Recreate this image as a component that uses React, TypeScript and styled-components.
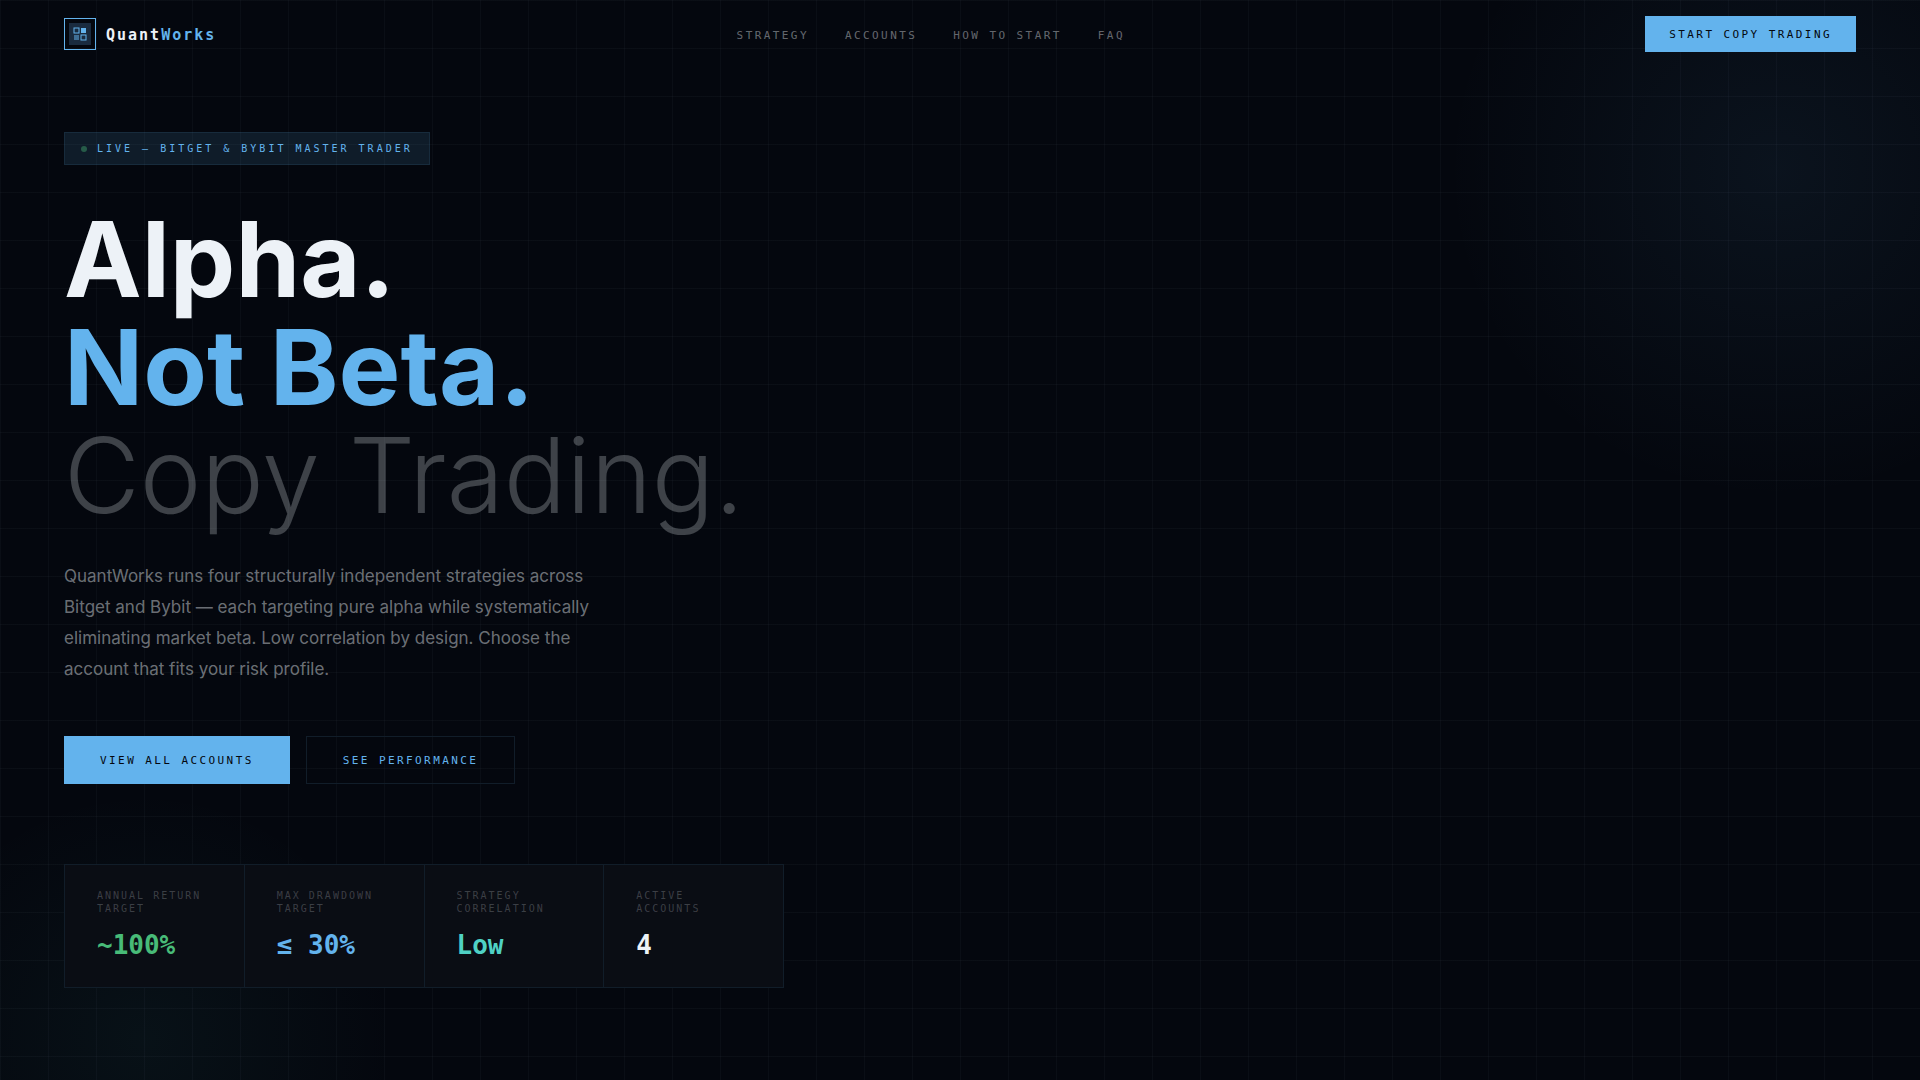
import React from 'react';
import styled, { createGlobalStyle } from 'styled-components';

const color = {
  base: '#04070e',
  panel: '#0a0d14',
  line: '#111d29',
  blue: '#63b3ed',
  green: '#48bb78',
  teal: '#4fd1c5',
  white: '#edf2f7',
};

const sans = "Inter, 'Liberation Sans', sans-serif";
const mono = "'DejaVu Sans Mono', 'Liberation Mono', monospace";

const GlobalStyle = createGlobalStyle`
  *, *::before, *::after { box-sizing: border-box; }
  body {
    margin: 0;
    background: ${color.base};
    color: ${color.white};
    font-family: ${sans};
  }
  h1, p, dl, dt, dd { margin: 0; }
  a { color: inherit; text-decoration: none; }
`;

const Page = styled.div`
  min-height: 100vh;
  background-color: ${color.base};
  background-image:
    linear-gradient(rgba(160, 185, 220, 0.04) 1px, transparent 1px),
    linear-gradient(90deg, rgba(160, 185, 220, 0.04) 1px, transparent 1px),
    radial-gradient(circle 330px at right 144px top 170px, rgba(99, 179, 237, 0.07), transparent),
    radial-gradient(circle 250px at left 145px bottom 40px, rgba(79, 209, 197, 0.05), transparent);
  background-size: 48px 48px, 48px 48px, auto, auto;
`;

const Header = styled.header`
  display: flex;
  align-items: center;
  justify-content: space-between;
  padding: 16px 64px;
`;

const Brand = styled.a`
  display: flex;
  align-items: center;
  gap: 10px;
  font: 700 15px/20px ${mono};
  letter-spacing: 2px;
`;

const BrandName = styled.span`
  padding-top: 2px;
`;

const Mark = styled.span`
  display: grid;
  place-items: center;
  width: 32px;
  height: 32px;
  border: 1px solid ${color.blue};
`;

const MarkInner = styled.span`
  display: grid;
  place-items: center;
  width: 22px;
  height: 22px;
  background: #1a2b3f;
`;

const Accent = styled.span`
  color: ${color.blue};
`;

const Nav = styled.nav`
  display: flex;
  gap: 36px;
`;

const NavLink = styled.a`
  padding-top: 3px;
  font: 400 11px/16px ${mono};
  letter-spacing: 0.22em;
  text-transform: uppercase;
  color: rgba(237, 242, 247, 0.42);
`;

const Action = styled.a<{ $size: 'small' | 'large'; $outline?: boolean }>`
  display: flex;
  align-items: center;
  height: ${(p) => (p.$size === 'small' ? '36px' : '48px')};
  padding: 2px ${(p) => (p.$size === 'small' ? '24px' : '36px')} 0;
  border: ${(p) => (p.$outline ? `1px solid ${color.line}` : '0')};
  background: ${(p) => (p.$outline ? 'transparent' : color.blue)};
  color: ${(p) => (p.$outline ? color.blue : color.base)};
  font: 400 11px/16px ${mono};
  letter-spacing: 0.22em;
  text-transform: uppercase;
`;

const Hero = styled.main`
  display: flex;
  flex-direction: column;
  align-items: flex-start;
  padding: 64px;
`;

const Badge = styled.div`
  display: flex;
  align-items: center;
  gap: 10px;
  padding: 8px 16px;
  border: 1px solid rgba(99, 179, 237, 0.1);
  background: rgba(99, 179, 237, 0.12);
  color: ${color.blue};
  font: 400 10px/15px ${mono};
  letter-spacing: 3px;
  text-transform: uppercase;
`;

const Dot = styled.span`
  width: 6px;
  height: 6px;
  border-radius: 50%;
  background: ${color.green};
  opacity: 0.4;
`;

const Title = styled.h1`
  margin-top: 40px;
  font: 700 104px/108px ${sans};
`;

const TitleLine = styled.span<{ $tone: 'plain' | 'blue' | 'faint' }>`
  display: block;
  font-weight: ${(p) => (p.$tone === 'faint' ? 300 : 700)};
  color: ${(p) =>
    p.$tone === 'blue' ? color.blue : p.$tone === 'faint' ? 'rgba(237, 242, 247, 0.25)' : color.white};
`;

const Lead = styled.p`
  max-width: 560px;
  margin-top: 32px;
  font-size: 17px;
  line-height: 31px;
  color: rgba(237, 242, 247, 0.45);
`;

const Actions = styled.div`
  display: flex;
  gap: 16px;
  margin-top: 51px;
`;

const Stats = styled.dl`
  display: grid;
  grid-template-columns: repeat(4, 1fr);
  gap: 1px;
  width: 100%;
  max-width: 720px;
  margin-top: 80px;
  border: 1px solid ${color.line};
  background: ${color.line};
`;

const Stat = styled.div`
  padding: 24px 32px;
  background: ${color.panel};
`;

const StatLabel = styled.dt`
  font: 400 10px/13px ${mono};
  letter-spacing: 2px;
  text-transform: uppercase;
  color: rgba(237, 242, 247, 0.22);
`;

const StatValue = styled.dd<{ $color: string }>`
  && { margin-top: 12px; }
  font: 700 26px/36px ${mono};
  color: ${(p) => p.$color};
`;

const links = [
  { label: 'Strategy', href: '#strategy' },
  { label: 'Accounts', href: '#accounts' },
  { label: 'How to start', href: '#start' },
  { label: 'FAQ', href: '#faq' },
];

const stats = [
  { label: 'Annual return target', value: '~100%', color: color.green },
  { label: 'Max drawdown target', value: '≤ 30%', color: color.blue },
  { label: 'Strategy correlation', value: 'Low', color: color.teal },
  { label: 'Active accounts', value: '4', color: color.white },
];

function LogoMark() {
  return (
    <Mark>
      <MarkInner>
        <svg width="14" height="14" viewBox="0 0 14 14" fill="none" aria-hidden="true">
          <rect x="1" y="1" width="5" height="5" stroke={color.blue} />
          <rect x="8" y="1" width="5" height="5" fill={color.blue} />
          <rect x="1" y="8" width="5" height="5" fill={color.blue} opacity="0.5" />
          <rect x="8" y="8" width="5" height="5" stroke={color.blue} />
        </svg>
      </MarkInner>
    </Mark>
  );
}

export default function App() {
  return (
    <>
      <GlobalStyle />
      <Page>
        <Header>
          <Brand href="#top">
            <LogoMark />
            <BrandName>
              Quant<Accent>Works</Accent>
            </BrandName>
          </Brand>
          <Nav>
            {links.map((link) => (
              <NavLink key={link.href} href={link.href}>
                {link.label}
              </NavLink>
            ))}
          </Nav>
          <Action $size="small" href="#start">
            Start copy trading
          </Action>
        </Header>
        <Hero>
          <Badge>
            <Dot />
            <span>Live — Bitget &amp; Bybit Master Trader</span>
          </Badge>
          <Title>
            <TitleLine $tone="plain">Alpha.</TitleLine>
            <TitleLine $tone="blue">Not Beta.</TitleLine>
            <TitleLine $tone="faint">Copy Trading.</TitleLine>
          </Title>
          <Lead>
            QuantWorks runs four structurally independent strategies across Bitget and Bybit — each
            targeting pure alpha while systematically eliminating market beta. Low correlation by
            design. Choose the account that fits your risk profile.
          </Lead>
          <Actions>
            <Action $size="large" href="#accounts">
              View all accounts
            </Action>
            <Action $size="large" $outline href="#performance">
              See performance
            </Action>
          </Actions>
          <Stats>
            {stats.map((stat) => (
              <Stat key={stat.label}>
                <StatLabel>{stat.label}</StatLabel>
                <StatValue $color={stat.color}>{stat.value}</StatValue>
              </Stat>
            ))}
          </Stats>
        </Hero>
      </Page>
    </>
  );
}
